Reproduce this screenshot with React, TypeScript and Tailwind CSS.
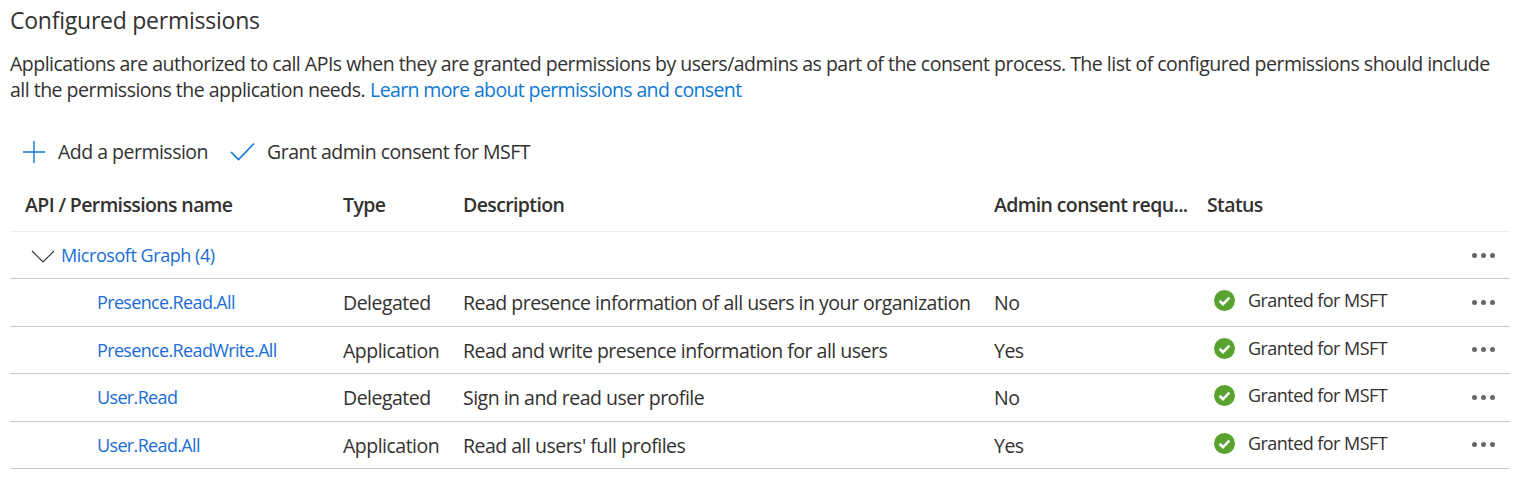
function More() {
  return (
    <div className="flex items-center gap-[4px]">
      <span className="size-[5px] rounded-full bg-[#666666]" />
      <span className="size-[5px] rounded-full bg-[#666666]" />
      <span className="size-[5px] rounded-full bg-[#666666]" />
    </div>
  );
}

function Check() {
  return (
    <svg width="21" height="21" viewBox="0 0 21 21" className="shrink-0">
      <circle cx="10.5" cy="10.5" r="10.5" fill="#57a32e" />
      <path d="M5.6 10.8 L9 14.1 L15.4 7.6" fill="none" stroke="#fff" strokeWidth="2.6" />
    </svg>
  );
}

const rows = [
  ["Presence.Read.All", "Delegated", "Read presence information of all users in your organization", "No"],
  ["Presence.ReadWrite.All", "Application", "Read and write presence information for all users", "Yes"],
  ["User.Read", "Delegated", "Sign in and read user profile", "No"],
  ["User.Read.All", "Application", "Read all users' full profiles", "Yes"],
];

const grid = "grid grid-cols-[318px_120px_531px_213px_1fr_64px] items-center";

export default function App() {
  return (
    <div className="h-[483px] w-[1540px] overflow-hidden bg-white pl-[10px] pr-[30px] font-['Open_Sans',sans-serif] text-[#323130] tracking-[-0.51px]">
      <h1 className="pt-[5px] text-[23px] leading-[30px] font-normal tracking-[-0.24px]">Configured permissions</h1>
      <div className="mt-[16px] w-[1500px] text-[19.5px] leading-[26px] text-[#323130]">
        <p className="whitespace-nowrap">Applications are authorized to call APIs when they are granted permissions by users/admins as part of the consent process. The list of configured permissions should include</p>
        <p className="flex gap-[5px] whitespace-nowrap">
          <span>all the permissions the application needs.</span>
          <a className="text-[#0f78d4] tracking-[-0.63px]">Learn more about permissions and consent</a>
        </p>
      </div>
      <div className="mt-[27px] flex h-[44px] items-center pl-[12px] text-[19.5px]">
        <svg width="24" height="24" viewBox="0 0 24 24" className="mr-[12px]">
          <path d="M12 1 V23 M1 12 H23" stroke="#0f78d4" strokeWidth="1.4" fill="none" />
        </svg>
        <span>Add a permission</span>
        <svg width="26" height="20" viewBox="0 0 26 20" className="ml-[22px] mr-[11px]">
          <path d="M1 10 L8.5 17.5 L24 1.5" stroke="#0f78d4" strokeWidth="1.6" fill="none" />
        </svg>
        <span>Grant admin consent for MSFT</span>
      </div>
      <div className={`${grid} mt-[5px] h-[53px] border-b border-[#ebebeb] pl-[15px] text-[19.5px] font-semibold text-[#323130] tracking-[-0.62px]`}>
        <span>API / Permissions name</span>
        <span>Type</span>
        <span>Description</span>
        <span className="truncate whitespace-nowrap">Admin consent requ...</span>
        <span>Status</span>
        <span />
      </div>
      <div className={`${grid} h-[47px] border-b border-[#c8c8c8] pl-[15px]`}>
        <div className="flex items-center gap-[6px] text-[#1a6dd6] pl-[6px]">
          <svg width="24" height="13" viewBox="0 0 24 13" className="mt-[3px] shrink-0">
            <path d="M1 1 L12 12 L23 1" stroke="#323130" strokeWidth="1.1" fill="none" />
          </svg>
          <span className="text-[18px] tracking-[-0.45px] whitespace-nowrap">Microsoft Graph (4)</span>
        </div>
        <span /><span /><span /><span />
        <div className="flex justify-end pr-[15px]"><More /></div>
      </div>
      {rows.map((r) => (
        <div key={r[0]} className={`${grid} h-[47.5px] border-b border-[#c8c8c8] pl-[15px] pt-[1px] text-[19.5px]`}>
          <a className="pl-[72px] text-[#1a6dd6] whitespace-nowrap text-[18px] tracking-[-0.65px]">{r[0]}</a>
          <span>{r[1]}</span>
          <span className="whitespace-nowrap">{r[2]}</span>
          <span>{r[3]}</span>
          <div className="flex items-center gap-[13px] pl-[7px] text-[18px] tracking-[-0.55px] whitespace-nowrap -mt-[4px]"><Check /><span>Granted for MSFT</span></div>
          <div className="flex justify-end pr-[15px] -mt-[1px]"><More /></div>
        </div>
      ))}
    </div>
  );
}
